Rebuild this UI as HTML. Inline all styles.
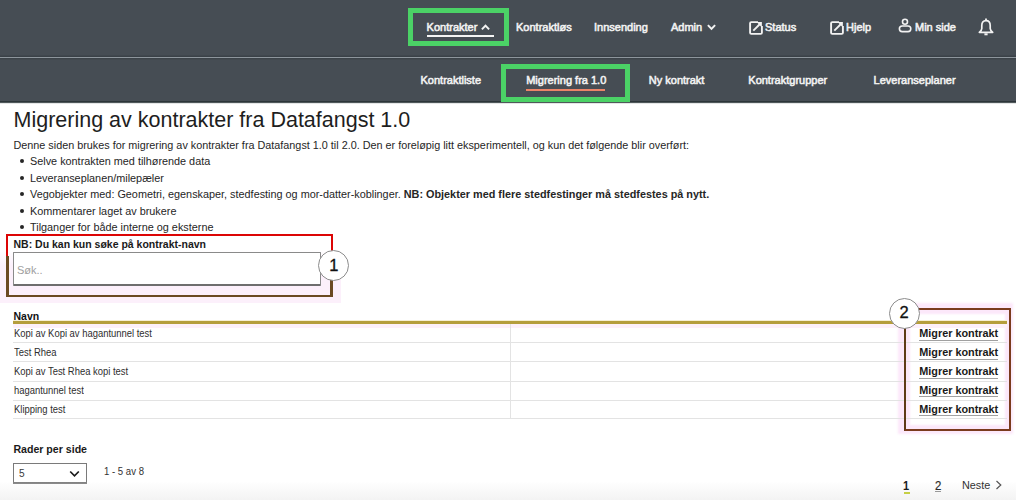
<!DOCTYPE html>
<html><head><meta charset="utf-8"><style>
html,body{margin:0;padding:0;}
body{width:1016px;height:500px;position:relative;overflow:hidden;background:#fff;font-family:"Liberation Sans",sans-serif;}
.t{position:absolute;white-space:nowrap;line-height:1;}
.r{position:absolute;}
.nav{-webkit-text-stroke:0.55px #f2f2f2;}
</style></head><body>
<div class="r" style="left:0px;top:0px;width:1016px;height:56px;background:#464d54;"></div>
<div class="r" style="left:0px;top:55px;width:1016px;height:1px;background:#40474e;"></div>
<div class="r" style="left:0px;top:56px;width:1016px;height:1px;background:#3a4147;"></div>
<div class="r" style="left:0px;top:57px;width:1016px;height:1px;background:#8d959c;"></div>
<div class="r" style="left:0px;top:58px;width:1016px;height:1px;background:#3c4349;"></div>
<div class="r" style="left:0px;top:59px;width:1016px;height:1px;background:#42494f;"></div>
<div class="r" style="left:0px;top:60px;width:1016px;height:41px;background:#464d54;"></div>
<div class="r" style="left:0px;top:101px;width:1016px;height:1px;background:#2c3539;"></div>
<div class="r" style="left:0px;top:102px;width:1016px;height:1px;background:#50585b;"></div>
<div class="r" style="left:0px;top:103px;width:1016px;height:1px;background:#e4e6e6;"></div>
<div class="t nav" style="left:426.6px;top:22.13px;font-size:11px;color:#f2f2f2;">Kontrakter</div>
<div class="r" style="left:426.6px;top:35px;width:67.5px;height:2px;background:#f4f4f4;"></div>
<svg class="r" style="left:481px;top:24.3px" width="9" height="6.5" viewBox="0 0 9 6.5"><path d="M0.9 5.4 L4.5 1.6 L8.1 5.4" fill="none" stroke="#f2f2f2" stroke-width="2"/></svg>
<div class="t nav" style="left:516px;top:22.13px;font-size:11px;color:#f2f2f2;">Kontraktløs</div>
<div class="t nav" style="left:594px;top:22.13px;font-size:11px;color:#f2f2f2;">Innsending</div>
<div class="t nav" style="left:671px;top:22.13px;font-size:11px;color:#f2f2f2;">Admin</div>
<svg class="r" style="left:707px;top:24.3px" width="9" height="6.5" viewBox="0 0 9 6.5"><path d="M0.9 1.1 L4.5 4.9 L8.1 1.1" fill="none" stroke="#f2f2f2" stroke-width="2"/></svg>
<svg class="r" style="left:749px;top:20.5px" width="14" height="14" viewBox="0 0 14 14"><path d="M9 1.1 H2.3 Q1.1 1.1 1.1 2.3 V11.7 Q1.1 12.9 2.3 12.9 H11.7 Q12.9 12.9 12.9 11.7 V5" fill="none" stroke="#f2f2f2" stroke-width="1.9"/><path d="M4.3 9.7 L11 3" fill="none" stroke="#f2f2f2" stroke-width="1.9"/><path d="M7.6 1.1 H12.9 V6.4 Z" fill="#f2f2f2"/></svg>
<div class="t nav" style="left:765px;top:22.13px;font-size:11px;color:#f2f2f2;">Status</div>
<svg class="r" style="left:829.6px;top:20.5px" width="14" height="14" viewBox="0 0 14 14"><path d="M9 1.1 H2.3 Q1.1 1.1 1.1 2.3 V11.7 Q1.1 12.9 2.3 12.9 H11.7 Q12.9 12.9 12.9 11.7 V5" fill="none" stroke="#f2f2f2" stroke-width="1.9"/><path d="M4.3 9.7 L11 3" fill="none" stroke="#f2f2f2" stroke-width="1.9"/><path d="M7.6 1.1 H12.9 V6.4 Z" fill="#f2f2f2"/></svg>
<div class="t nav" style="left:846px;top:22.13px;font-size:11px;color:#f2f2f2;">Hjelp</div>
<svg class="r" style="left:898px;top:18px" width="14" height="15" viewBox="0 0 14 15"><circle cx="7" cy="3.7" r="2.5" fill="none" stroke="#f2f2f2" stroke-width="1.6"/><rect x="1.4" y="8" width="11.4" height="5.6" rx="2.8" fill="none" stroke="#f2f2f2" stroke-width="1.6"/></svg>
<div class="t nav" style="left:915px;top:22.13px;font-size:11px;color:#f2f2f2;">Min side</div>
<svg class="r" style="left:978px;top:18px" width="16" height="18" viewBox="0 0 16 18"><path d="M8 0.6 V2.4" stroke="#f2f2f2" stroke-width="1.8"/><path d="M8 2.6 C5 2.6 3.8 4.8 3.8 7.6 V10.4 C3.8 12 2.8 13 1.3 14.3 H14.7 C13.2 13 12.2 12 12.2 10.4 V7.6 C12.2 4.8 11 2.6 8 2.6 Z" fill="none" stroke="#f2f2f2" stroke-width="1.7" stroke-linejoin="round"/><path d="M6.4 16.3 H9.6" stroke="#f2f2f2" stroke-width="2"/></svg>
<div class="r" style="left:408.3px;top:8px;width:100.6px;height:37.7px;box-sizing:border-box;border:5.2px solid #4bd266;"></div>
<div class="t nav" style="left:420.5px;top:74.93px;font-size:11px;color:#f2f2f2;">Kontraktliste</div>
<div class="t nav" style="left:526.2px;top:74.93px;font-size:11px;color:#f2f2f2;">Migrering fra 1.0</div>
<div class="r" style="left:525.6px;top:88.5px;width:79.7px;height:2px;background:#ec8468;"></div>
<div class="t nav" style="left:648.8px;top:74.93px;font-size:11px;color:#f2f2f2;">Ny kontrakt</div>
<div class="t nav" style="left:748.3px;top:74.93px;font-size:11px;color:#f2f2f2;">Kontraktgrupper</div>
<div class="t nav" style="left:873.6px;top:74.93px;font-size:11px;color:#f2f2f2;">Leveranseplaner</div>
<div class="r" style="left:501px;top:64.4px;width:129.2px;height:37.8px;box-sizing:border-box;border:5.2px solid #4bd266;"></div>
<div class="t " style="left:13.5px;top:109.94px;font-size:21.5px;color:#1e1e1e;">Migrering av kontrakter fra Datafangst 1.0</div>
<div class="t " style="left:13.5px;top:139.67px;font-size:10.82px;color:#262626;">Denne siden brukes for migrering av kontrakter fra Datafangst 1.0 til 2.0. Den er foreløpig litt eksperimentell, og kun det følgende blir overført:</div>
<div class="r" style="left:19.9px;top:159.1px;width:4.2px;height:4.2px;background:#262626;border-radius:50%;"></div>
<div class="t " style="left:30px;top:156.15px;font-size:10.85px;color:#262626;">Selve kontrakten med tilhørende data</div>
<div class="r" style="left:19.9px;top:175.6px;width:4.2px;height:4.2px;background:#262626;border-radius:50%;"></div>
<div class="t " style="left:30px;top:172.65px;font-size:10.85px;color:#262626;">Leveranseplanen/milepæler</div>
<div class="r" style="left:19.9px;top:192.2px;width:4.2px;height:4.2px;background:#262626;border-radius:50%;"></div>
<div class="t " style="left:30px;top:189.25px;font-size:10.85px;color:#262626;">Vegobjekter med: Geometri, egenskaper, stedfesting og mor-datter-koblinger. <b>NB: Objekter med flere stedfestinger må stedfestes på nytt.</b></div>
<div class="r" style="left:19.9px;top:208.7px;width:4.2px;height:4.2px;background:#262626;border-radius:50%;"></div>
<div class="t " style="left:30px;top:205.75px;font-size:10.85px;color:#262626;">Kommentarer laget av brukere</div>
<div class="r" style="left:19.9px;top:225.29999999999998px;width:4.2px;height:4.2px;background:#262626;border-radius:50%;"></div>
<div class="t " style="left:30px;top:222.35px;font-size:10.85px;color:#262626;">Tilganger for både interne og eksterne</div>
<div class="r" style="left:0px;top:250px;width:341px;height:53px;background:linear-gradient(to bottom, rgba(252,240,251,0) 0%, rgba(252,240,251,1) 30%, rgba(252,240,251,1) 100%);"></div>
<div class="r" style="left:13px;top:252px;width:308px;height:33.5px;background:#fff;"></div>
<div class="r" style="left:6.4px;top:234.3px;width:326.6px;height:62.4px;box-sizing:border-box;border:2.6px solid #dc0505;border-left-width:2.3px;border-right-width:2.6px;border-bottom-color:#6b4a22;"></div>
<div class="r" style="left:6.4px;top:255.5px;width:2.3px;height:41.2px;background:#6b4a22;"></div>
<div class="r" style="left:330.4px;top:262px;width:2.6px;height:34.7px;background:#6b4a22;"></div>
<div class="t " style="left:13.5px;top:239.11px;font-size:10.5px;color:#1a1a1a;font-weight:bold;">NB: Du kan kun søke på kontrakt-navn</div>
<div class="r" style="left:13px;top:252px;width:308px;height:33.5px;box-sizing:border-box;border:1.5px solid #8a8a8a;border-bottom:2px solid #6e6e6e;border-radius:1px;"></div>
<div class="t " style="left:17px;top:265.33px;font-size:11px;color:#a0a0a0;">Søk..</div>
<div class="r" style="left:318.1px;top:250.3px;width:31px;height:31px;box-sizing:border-box;border:1px solid #8c8c8c;border-radius:50%;background:#fff;"></div>
<div class="t " style="left:329.2px;top:256.80px;font-size:16.5px;color:#111;-webkit-text-stroke:0.3px #111;">1</div>
<div class="r" style="left:903.8px;top:307.6px;width:107.2px;height:123.2px;box-shadow:-2px -1px 2px 4px rgba(252,230,249,0.9), inset 0 0 2px 6px rgba(252,230,249,0.9);"></div>
<div class="t " style="left:13.5px;top:310.62px;font-size:10.5px;color:#111;font-weight:bold;">Navn</div>
<div class="r" style="left:13px;top:324px;width:994px;height:3.5px;background:#fdf0fa;"></div>
<div class="r" style="left:13px;top:320px;width:994px;height:1px;background:#f6efd2;"></div>
<div class="r" style="left:13px;top:321px;width:994px;height:3px;background:#b59e3c;"></div>
<div class="t " style="left:13.5px;top:328.99px;font-size:10.4px;color:#2e2e2e;transform:scaleX(0.908);transform-origin:0 0;">Kopi av Kopi av hagantunnel test</div>
<div class="r" style="left:13px;top:342px;width:994px;height:1px;background:#e3e3e3;"></div>
<div class="t " style="left:13.5px;top:347.99px;font-size:10.4px;color:#2e2e2e;transform:scaleX(0.908);transform-origin:0 0;">Test Rhea</div>
<div class="r" style="left:13px;top:361px;width:994px;height:1px;background:#e3e3e3;"></div>
<div class="t " style="left:13.5px;top:366.89px;font-size:10.4px;color:#2e2e2e;transform:scaleX(0.908);transform-origin:0 0;">Kopi av Test Rhea kopi test</div>
<div class="r" style="left:13px;top:381px;width:994px;height:1px;background:#e3e3e3;"></div>
<div class="t " style="left:13.5px;top:385.79px;font-size:10.4px;color:#2e2e2e;transform:scaleX(0.908);transform-origin:0 0;">hagantunnel test</div>
<div class="r" style="left:13px;top:400px;width:994px;height:1px;background:#e3e3e3;"></div>
<div class="t " style="left:13.5px;top:404.69px;font-size:10.4px;color:#2e2e2e;transform:scaleX(0.908);transform-origin:0 0;">Klipping test</div>
<div class="r" style="left:13px;top:418px;width:994px;height:1px;background:#e3e3e3;"></div>
<div class="t" style="right:17.799999999999955px;top:328.05px;font-size:10.85px;color:#1a1a1a;font-weight:bold;">Migrer kontrakt</div>
<div class="r" style="left:919.2px;top:340px;width:79px;height:1px;background:#a0a0a0;"></div>
<div class="t" style="right:17.799999999999955px;top:347.05px;font-size:10.85px;color:#1a1a1a;font-weight:bold;">Migrer kontrakt</div>
<div class="r" style="left:919.2px;top:359px;width:79px;height:1px;background:#a0a0a0;"></div>
<div class="t" style="right:17.799999999999955px;top:365.85px;font-size:10.85px;color:#1a1a1a;font-weight:bold;">Migrer kontrakt</div>
<div class="r" style="left:919.2px;top:378px;width:79px;height:1px;background:#a0a0a0;"></div>
<div class="t" style="right:17.799999999999955px;top:384.65px;font-size:10.85px;color:#1a1a1a;font-weight:bold;">Migrer kontrakt</div>
<div class="r" style="left:919.2px;top:396px;width:79px;height:1px;background:#a0a0a0;"></div>
<div class="t" style="right:17.799999999999955px;top:403.65px;font-size:10.85px;color:#1a1a1a;font-weight:bold;">Migrer kontrakt</div>
<div class="r" style="left:919.2px;top:415px;width:79px;height:1px;background:#a0a0a0;"></div>
<div class="r" style="left:510px;top:324px;width:1px;height:95px;background:#e3e3e3;"></div>
<div class="r" style="left:903.8px;top:307.6px;width:107.2px;height:123.2px;box-sizing:border-box;border:2.4px solid #7a3b1d;border-left-color:#5e3a16;"></div>
<div class="r" style="left:888.9px;top:297.7px;width:31px;height:31px;box-sizing:border-box;border:1px solid #8c8c8c;border-radius:50%;background:#fff;"></div>
<div class="t " style="left:899.6px;top:303.80px;font-size:16.5px;color:#111;-webkit-text-stroke:0.3px #111;">2</div>
<div class="t " style="left:13.4px;top:444.34px;font-size:10.6px;color:#1a1a1a;font-weight:bold;">Rader per side</div>
<div class="r" style="left:13.4px;top:463px;width:73.8px;height:20.5px;box-sizing:border-box;border:1.5px solid #7a7a7a;border-bottom-width:2px;background:#fff;"></div>
<div class="t " style="left:18.7px;top:468.23px;font-size:11px;color:#3a3a3a;transform:scaleX(0.92);transform-origin:0 0;">5</div>
<svg class="r" style="left:69px;top:469px" width="11" height="9" viewBox="0 0 11 9"><path d="M1.2 2.5 L5.5 6.8 L9.8 2.5" fill="none" stroke="#1a1a1a" stroke-width="1.7"/></svg>
<div class="t " style="left:104px;top:466.14px;font-size:10.6px;color:#333;transform:scaleX(0.905);transform-origin:0 0;">1 - 5 av 8</div>
<div class="r" style="left:0px;top:481px;width:1016px;height:19px;background:linear-gradient(to bottom, rgba(243,243,243,0) 0%, rgba(243,243,243,1) 100%);"></div>
<div class="t " style="left:903.2px;top:479.56px;font-size:12px;color:#1a1a1a;font-weight:bold;transform:scaleX(0.92);transform-origin:0 0;">1</div>
<div class="r" style="left:903.6px;top:492.2px;width:6px;height:1.6px;background:#c6cf45;"></div>
<div class="t " style="left:935px;top:479.56px;font-size:12px;color:#2a2a2a;-webkit-text-stroke:0.2px #2a2a2a;transform:scaleX(0.95);transform-origin:0 0;">2</div>
<div class="r" style="left:935.3px;top:491.3px;width:5.8px;height:1.2px;background:#999;"></div>
<div class="t " style="left:962px;top:479.71px;font-size:11.8px;color:#333;transform:scaleX(0.92);transform-origin:0 0;">Neste</div>
<svg class="r" style="left:995px;top:480px" width="8" height="10" viewBox="0 0 8 10"><path d="M1.5 1 L5.8 5 L1.5 9" fill="none" stroke="#555" stroke-width="1.2"/></svg>
</body></html>
